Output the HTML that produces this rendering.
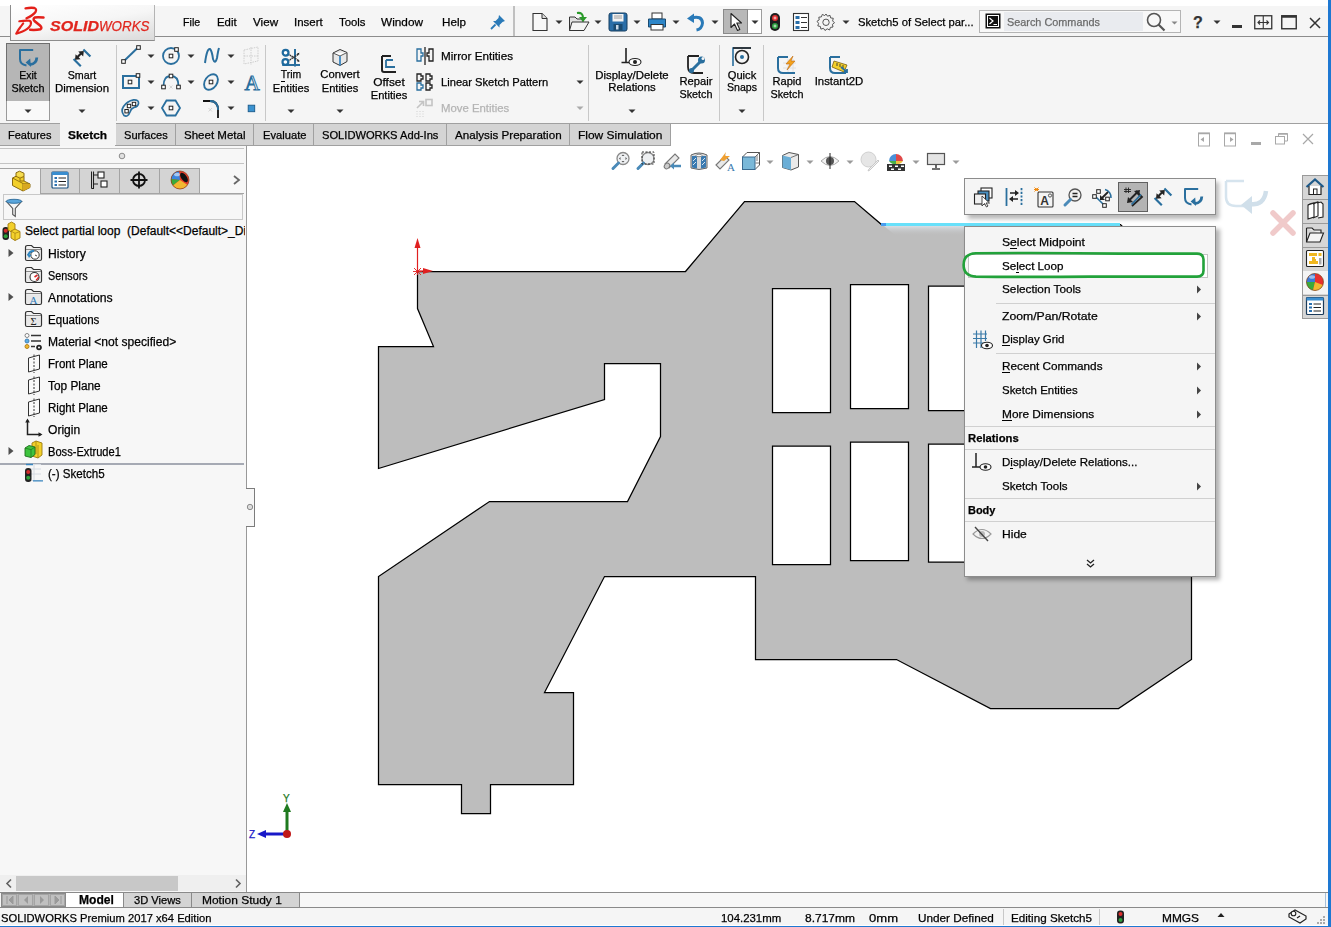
<!DOCTYPE html>
<html><head><meta charset="utf-8"><style>
html,body{margin:0;padding:0;}
body{width:1331px;height:927px;position:relative;overflow:hidden;background:#fff;font-family:"Liberation Sans",sans-serif;}
.t{position:absolute;white-space:pre;line-height:normal;-webkit-text-stroke:0.25px currentColor;}
.r{position:absolute;box-sizing:border-box;}
svg.r{overflow:visible;}
</style></head><body>

<div class="r" style="left:1328px;top:0px;width:3px;height:927px;background:#1e78d2;"></div>
<div class="r" style="left:0px;top:926px;width:1331px;height:1px;background:#1e78d2;"></div>
<div class="r" style="left:0px;top:6px;width:1328px;height:30px;background:#f5f5f5;"></div>
<div class="r" style="left:0px;top:36px;width:1328px;height:1px;background:#8c8c8c;"></div>
<div class="r" style="left:0px;top:37px;width:1328px;height:86px;background:#f5f5f5;"></div>
<div class="r" style="left:0px;top:123px;width:671px;height:23px;background:#d4d4d4;border-top:1px solid #a0a0a0;border-bottom:1px solid #a0a0a0;"></div>
<div class="r" style="left:670px;top:123px;width:658px;height:1px;background:#a0a0a0;"></div>
<div class="r" style="left:0px;top:146px;width:247px;height:746px;background:#f7f7f7;"></div>
<div class="r" style="left:246px;top:146px;width:1px;height:746px;background:#999;"></div>
<div class="r" style="left:0px;top:892px;width:1328px;height:16px;background:#f7f7f7;border-top:1px solid #8a8a8a;"></div>
<div class="r" style="left:66px;top:893px;width:57px;height:14px;background:#fff;"></div>
<div class="r" style="left:0px;top:907px;width:1328px;height:18px;background:#f5f5f5;border-top:1px solid #8a8a8a;"></div>
<svg class="r" style="left:0px;top:0px;pointer-events:none;" width="1331" height="927" viewBox="0 0 1331 927"><path d="M417.5 271.5 L685.5 271.5 L744.5 201.5 L854.5 201.5 L881.5 224.5 L1120.5 224.5 L1191.5 295.5 L1191.5 659.5 L1118.5 708.5 L990.5 708.5 L896.5 659.5 L755.5 659.5 L755.5 576.5 L604.5 576.5 L544.5 692.5 L573.5 692.5 L573.5 784.5 L490.5 784.5 L490.5 813.5 L461.5 813.5 L461.5 784.5 L378.5 784.5 L378.5 576.5 L489.5 501.5 L627.5 501.5 L660.5 436.5 L660.5 363.5 L604.5 363.5 L604.5 399.5 L378.5 468.5 L378.5 346.5 L433.5 346.5 L417.5 308.5 Z M772.5 288.5 h58 v124 h-58 Z M850.5 284.5 h58 v124 h-58 Z M928.5 286.0 h58 v124.5 h-58 Z M772.5 446.0 h58 v118.5 h-58 Z M850.5 442.0 h58 v118.5 h-58 Z M928.5 444.0 h58 v118 h-58 Z" fill="#bdbdbd" fill-rule="evenodd" stroke="#000" stroke-width="1.25" stroke-linejoin="miter"/><defs><linearGradient id="hg" x1="0" y1="0" x2="0" y2="1"><stop offset="0" stop-color="#dfe6ee"/><stop offset="1" stop-color="#bdbdbd" stop-opacity="0"/></linearGradient></defs><path d="M884 226 H1120 V236 H896 Z" fill="url(#hg)" opacity="0.8"/><line x1="881" y1="224.5" x2="1120" y2="224.5" stroke="#68e0fa" stroke-width="3"/><line x1="881" y1="224.5" x2="886" y2="224.5" stroke="#4a9ef0" stroke-width="3"/><line x1="417.5" y1="271" x2="417.5" y2="246" stroke="#e02020" stroke-width="1.2"/><path d="M414.5 248 L417.5 238 L420.5 248 Z" fill="#e02020"/><line x1="417" y1="271" x2="425" y2="271" stroke="#e02020" stroke-width="1.2"/><path d="M423 268 L433 271 L423 274 Z" fill="#e02020"/><path d="M414 268 L421 275 M421 268 L414 275 M417.5 267 V275 M413 271.5 H422" stroke="#e02020" stroke-width="0.9"/></svg>
<svg class="r" style="left:0px;top:0px;pointer-events:none;" width="1331" height="927" viewBox="0 0 1331 927"><line x1="287" y1="833" x2="287" y2="810" stroke="#1f7a1f" stroke-width="3"/><path d="M283 812 L287 803 L291 812 Z" fill="#1f7a1f"/><line x1="286" y1="834" x2="265" y2="834" stroke="#1818c8" stroke-width="3"/><path d="M266 830 L257 834 L266 838 Z" fill="#1818c8"/><circle cx="287" cy="834" r="4" fill="#c01818"/></svg>
<div class="t" style="left:283px;top:793.00px;font-size:10px;color:#1f7a1f;font-weight:normal;">Y</div>
<div class="t" style="left:249px;top:829.00px;font-size:10px;color:#1818c8;font-weight:normal;">Z</div>
<div class="r" style="left:0px;top:148px;width:244px;height:1px;background:#c4c4c4;"></div>
<div class="r" style="left:0px;top:163px;width:244px;height:1px;background:#c4c4c4;"></div>
<svg class="r" style="left:118px;top:152px;" width="8" height="8" viewBox="0 0 8 8"><circle cx="4" cy="4" r="2.8" fill="#e0e0e0" stroke="#8c8c8c" stroke-width="1"/></svg>
<div class="r" style="left:40px;top:168px;width:40px;height:26px;background:#d4d4d4;border:1px solid #a4a4a4;border-bottom:none;"></div>
<div class="r" style="left:80px;top:168px;width:40px;height:26px;background:#d4d4d4;border:1px solid #a4a4a4;border-bottom:none;border-left:none;"></div>
<div class="r" style="left:120px;top:168px;width:40px;height:26px;background:#d4d4d4;border:1px solid #a4a4a4;border-bottom:none;border-left:none;"></div>
<div class="r" style="left:160px;top:168px;width:40px;height:26px;background:#d4d4d4;border:1px solid #a4a4a4;border-bottom:none;border-left:none;"></div>
<div class="r" style="left:0px;top:193px;width:244px;height:1px;background:#a4a4a4;"></div>
<div class="r" style="left:0px;top:168px;width:40px;height:26px;background:#f7f7f7;border-top:1px solid #a4a4a4;"></div>
<div class="r" style="left:40px;top:193px;width:204px;height:1px;background:#a4a4a4;"></div>
<svg class="r" style="left:230px;top:174px;" width="12" height="12" viewBox="0 0 12 12"><path d="M4 2 L9 6 L4 10" fill="none" stroke="#666" stroke-width="1.8"/></svg>
<div class="r" style="left:3px;top:194px;width:240px;height:26px;background:#f7f7f7;border:1px solid #c8c8c8;"></div>
<svg class="r" style="left:5px;top:198px;" width="20" height="20" viewBox="0 0 20 20"><path d="M1.5 3.5 H16.5 L10.3 10.5 V18.5 L7.7 16.5 V10.5 Z" fill="#f4f4f4" stroke="#555" stroke-width="1.1"/><ellipse cx="9" cy="3.3" rx="7.8" ry="2" fill="#5aa6dc" stroke="#2a6a9a" stroke-width="0.9"/></svg>
<div class="r" style="left:25px;top:222px;width:220px;height:20px;overflow:hidden">
<div class="t" style="left:0px;top:2.00px;font-size:12px;color:#000;font-weight:normal;">Select partial loop  (Default&lt;&lt;Default&gt;_Display State 1&gt;)</div>
</div>
<div class="t" style="left:48px;top:247.00px;font-size:12px;color:#000;font-weight:normal;transform:scaleX(1.0097);transform-origin:left top;">History</div>
<div class="t" style="left:48px;top:269.00px;font-size:12px;color:#000;font-weight:normal;transform:scaleX(0.9018);transform-origin:left top;">Sensors</div>
<div class="t" style="left:48px;top:291.00px;font-size:12px;color:#000;font-weight:normal;transform:scaleX(1.0208);transform-origin:left top;">Annotations</div>
<div class="t" style="left:48px;top:313.00px;font-size:12px;color:#000;font-weight:normal;transform:scaleX(0.9630);transform-origin:left top;">Equations</div>
<div class="t" style="left:48px;top:335.00px;font-size:12px;color:#000;font-weight:normal;transform:scaleX(1.0062);transform-origin:left top;">Material &lt;not specified&gt;</div>
<div class="t" style="left:48px;top:357.00px;font-size:12px;color:#000;font-weight:normal;transform:scaleX(0.9640);transform-origin:left top;">Front Plane</div>
<div class="t" style="left:48px;top:379.00px;font-size:12px;color:#000;font-weight:normal;transform:scaleX(0.9874);transform-origin:left top;">Top Plane</div>
<div class="t" style="left:48px;top:401.00px;font-size:12px;color:#000;font-weight:normal;transform:scaleX(0.9639);transform-origin:left top;">Right Plane</div>
<div class="t" style="left:48px;top:423.00px;font-size:12px;color:#000;font-weight:normal;transform:scaleX(1.0059);transform-origin:left top;">Origin</div>
<div class="t" style="left:48px;top:445.00px;font-size:12px;color:#000;font-weight:normal;transform:scaleX(0.9262);transform-origin:left top;">Boss-Extrude1</div>
<div class="t" style="left:48px;top:467.00px;font-size:12px;color:#000;font-weight:normal;transform:scaleX(0.9662);transform-origin:left top;">(-) Sketch5</div>
<svg class="r" style="left:7px;top:247.5px;" width="8" height="10" viewBox="0 0 8 10"><path d="M1.5 1 L6.5 5 L1.5 9 Z" fill="#505050"/></svg>
<svg class="r" style="left:7px;top:291.5px;" width="8" height="10" viewBox="0 0 8 10"><path d="M1.5 1 L6.5 5 L1.5 9 Z" fill="#505050"/></svg>
<svg class="r" style="left:7px;top:445.5px;" width="8" height="10" viewBox="0 0 8 10"><path d="M1.5 1 L6.5 5 L1.5 9 Z" fill="#505050"/></svg>
<div class="r" style="left:0px;top:463px;width:244px;height:2px;background:#a6aab4;"></div>
<div class="r" style="left:246px;top:488px;width:9px;height:39px;background:#f7f7f7;border:1.5px solid #7c7c7c;border-left:none;"></div>
<svg class="r" style="left:246px;top:503px;" width="8" height="8" viewBox="0 0 8 8"><circle cx="4" cy="4" r="2.7" fill="#dcdcdc" stroke="#8c8c8c" stroke-width="1"/></svg>
<div class="r" style="left:0px;top:875px;width:246px;height:16px;background:#efefef;"></div>
<div class="r" style="left:16px;top:876px;width:162px;height:15px;background:#c8c8c8;"></div>
<svg class="r" style="left:2px;top:876px;" width="14" height="15" viewBox="0 0 14 15"><path d="M9 3.5 L5 7.5 L9 11.5" fill="none" stroke="#606060" stroke-width="1.6"/></svg>
<svg class="r" style="left:231px;top:876px;" width="14" height="15" viewBox="0 0 14 15"><path d="M5 3.5 L9 7.5 L5 11.5" fill="none" stroke="#606060" stroke-width="1.6"/></svg>
<svg class="r" style="left:1px;top:221px;" width="21" height="20" viewBox="0 0 21 20"><rect x="1.5" y="6" width="6.5" height="13" rx="3" fill="#222"/><circle cx="4.7" cy="9.7" r="2" fill="#d42a2a"/><circle cx="4.7" cy="15.2" r="2" fill="#2ea33a"/><path d="M7 3 L10.5 1 L14 3 V9 L10.5 11 L7 9 Z" fill="#f2cf2a" stroke="#a07a10" stroke-width="0.9"/><path d="M10 10 L14 8 L19 10.5 V17 L14 19.5 L10 17 Z" fill="#f4d22c" stroke="#a07a10" stroke-width="0.9"/><path d="M10 10 L14 12.3 L19 10.5 M14 12.3 V19.5" fill="none" stroke="#a07a10" stroke-width="0.7"/></svg>
<svg class="r" style="left:24px;top:244px;" width="20" height="19" viewBox="0 0 20 19"><path d="M1.5 3.5 Q1.5 1.5 3.5 1.5 H7.5 L9.5 3.5 H15.5 Q17.5 3.5 17.5 5.5 V15 Q17.5 16.5 16 16.5 H3 Q1.5 16.5 1.5 15 Z" fill="#f2f2f2" stroke="#333" stroke-width="1.2"/><path d="M2 5.5 H17" stroke="#888" stroke-width="1"/><rect x="3" y="6.5" width="13" height="9" fill="#e8e8e8"/><circle cx="11" cy="11" r="4.2" fill="#fff" stroke="#333" stroke-width="1"/><path d="M11 11 L13 12" stroke="#333" stroke-width="0.9"/><path d="M4 11.5 Q5.5 6.5 10 7" fill="none" stroke="#2f86c0" stroke-width="2"/><path d="M3 10 L5 14 L7.5 11 Z" fill="#2f86c0"/></svg>
<svg class="r" style="left:24px;top:266px;" width="20" height="19" viewBox="0 0 20 19"><path d="M1.5 3.5 Q1.5 1.5 3.5 1.5 H7.5 L9.5 3.5 H15.5 Q17.5 3.5 17.5 5.5 V15 Q17.5 16.5 16 16.5 H3 Q1.5 16.5 1.5 15 Z" fill="#f2f2f2" stroke="#333" stroke-width="1.2"/><path d="M2 5.5 H17" stroke="#888" stroke-width="1"/><rect x="3" y="6.5" width="13" height="9" fill="#e8e8e8"/><circle cx="10.5" cy="11" r="4.5" fill="#fff" stroke="#333" stroke-width="1.1"/><path d="M10.5 11 L13.5 9" stroke="#d42a2a" stroke-width="1.6"/><path d="M12 14 A4 4 0 0 0 14.5 11" stroke="#d42a2a" stroke-width="1.4" fill="none"/></svg>
<svg class="r" style="left:24px;top:288px;" width="20" height="19" viewBox="0 0 20 19"><path d="M1.5 3.5 Q1.5 1.5 3.5 1.5 H7.5 L9.5 3.5 H15.5 Q17.5 3.5 17.5 5.5 V15 Q17.5 16.5 16 16.5 H3 Q1.5 16.5 1.5 15 Z" fill="#f2f2f2" stroke="#333" stroke-width="1.2"/><path d="M2 5.5 H17" stroke="#888" stroke-width="1"/><rect x="3" y="6.5" width="13" height="9" fill="#e8e8e8"/><text x="9.5" y="15.5" font-family="Liberation Serif" font-size="11" fill="#2f7ab8" text-anchor="middle">A</text></svg>
<svg class="r" style="left:24px;top:310px;" width="20" height="19" viewBox="0 0 20 19"><path d="M1.5 3.5 Q1.5 1.5 3.5 1.5 H7.5 L9.5 3.5 H15.5 Q17.5 3.5 17.5 5.5 V15 Q17.5 16.5 16 16.5 H3 Q1.5 16.5 1.5 15 Z" fill="#f2f2f2" stroke="#333" stroke-width="1.2"/><path d="M2 5.5 H17" stroke="#888" stroke-width="1"/><rect x="3" y="6.5" width="13" height="9" fill="#e8e8e8"/><text x="9.5" y="15" font-family="Liberation Serif" font-size="10.5" fill="#222" text-anchor="middle">&#931;</text></svg>
<svg class="r" style="left:24px;top:332px;" width="20" height="19" viewBox="0 0 20 19"><circle cx="3" cy="3.5" r="2" fill="#fff" stroke="#777" stroke-width="0.9"/><circle cx="3" cy="9" r="2" fill="#5aaee6" stroke="#3a7ab0" stroke-width="0.9"/><circle cx="3" cy="14.5" r="2" fill="#f0b830" stroke="#b07a10" stroke-width="0.9"/><path d="M7 3.5 H17 M7 9 H17 M7 14.5 H11" stroke="#333" stroke-width="1.4"/><circle cx="15" cy="15.5" r="2.8" fill="#222"/><circle cx="15" cy="15.5" r="1" fill="#fff"/></svg>
<svg class="r" style="left:26px;top:354px;" width="16" height="20" viewBox="0 0 16 20"><path d="M2.5 4 L13.5 1 V15 L2.5 18 Z" fill="#fafafa" stroke="#333" stroke-width="1"/><path d="M8 0.5 V19" stroke="#333" stroke-width="1" stroke-dasharray="2 1.5"/></svg>
<svg class="r" style="left:26px;top:376px;" width="16" height="20" viewBox="0 0 16 20"><path d="M2.5 4 L13.5 1 V15 L2.5 18 Z" fill="#fafafa" stroke="#333" stroke-width="1"/><path d="M8 0.5 V19" stroke="#333" stroke-width="1" stroke-dasharray="2 1.5"/></svg>
<svg class="r" style="left:26px;top:398px;" width="16" height="20" viewBox="0 0 16 20"><path d="M2.5 4 L13.5 1 V15 L2.5 18 Z" fill="#fafafa" stroke="#333" stroke-width="1"/><path d="M8 0.5 V19" stroke="#333" stroke-width="1" stroke-dasharray="2 1.5"/></svg>
<svg class="r" style="left:24px;top:418px;" width="20" height="20" viewBox="0 0 20 20"><path d="M3.5 2 V16.5 H17" fill="none" stroke="#222" stroke-width="1.5"/><path d="M1.2 4.5 L3.5 0.5 L5.8 4.5 Z M14.5 14.2 L18.5 16.5 L14.5 18.8 Z" fill="#222"/></svg>
<svg class="r" style="left:24px;top:440px;" width="20" height="20" viewBox="0 0 20 20"><path d="M8 3 L12 1 L18 3 V15 L14 18 L8 16 Z" fill="#f2d02a" stroke="#9a7a10" stroke-width="0.9"/><path d="M12 1 V14 M14 5 V18" stroke="#9a7a10" stroke-width="0.7"/><path d="M1 8 L5 5.5 L11 7 V14.5 L7 17.5 L1 16 Z" fill="#3ec43e" stroke="#1e6e1e" stroke-width="0.9"/><path d="M1 8 L7 9.7 L11 7 M7 9.7 V17.5" fill="none" stroke="#1e6e1e" stroke-width="0.7"/></svg>
<svg class="r" style="left:24px;top:463px;" width="20" height="20" viewBox="0 0 20 20"><path d="M2 1.5 H17 M2 17.5 H17 M10 2 V17 M6 6 H17 M6 11 H17" stroke="#d6dbe2" stroke-width="1"/><path d="M2 1.5 H9 M9 17.8 H19" stroke="#3a86c0" stroke-width="1.3"/><rect x="1" y="5" width="6.5" height="14" rx="3" fill="#222"/><circle cx="4.2" cy="9" r="2" fill="#d42a2a"/><circle cx="4.2" cy="14.8" r="2" fill="#2ea33a"/></svg>
<svg class="r" style="left:10px;top:170px;" width="22" height="22" viewBox="0 0 22 22"><path d="M2.5 8 L9.5 4.5 L14 6.5 V11 L20 14 V17.5 L13 21 L2.5 15.5 Z" fill="#f2cf2a" stroke="#8a6a10" stroke-width="1"/><path d="M6 6.3 V2.8 L9.5 1.2 L14 3.2 V6.5" fill="#f6dc50" stroke="#8a6a10" stroke-width="1"/><path d="M2.5 8 L13 13.5 V21 M13 13.5 L20 14 M6 6.3 L10 8.2 L14 6.5 M10 8.2 V11 L14 11" fill="none" stroke="#8a6a10" stroke-width="0.9"/><path d="M13 13.5 L20 14 V17.5 L13 21 Z" fill="#d8a820"/></svg>
<svg class="r" style="left:50px;top:170px;" width="20" height="20" viewBox="0 0 20 20"><rect x="2" y="2" width="16" height="16" rx="1" fill="#fff" stroke="#1a5080" stroke-width="1.2"/><rect x="2" y="2" width="16" height="3" fill="#3a8ed0"/><path d="M4.5 8 H7 M4.5 11.5 H7 M4.5 15 H7" stroke="#2a70b0" stroke-width="1.8"/><path d="M8.5 8 H16 M8.5 11.5 H16 M8.5 15 H16" stroke="#222" stroke-width="1"/></svg>
<svg class="r" style="left:90px;top:170px;" width="20" height="20" viewBox="0 0 20 20"><path d="M3.5 1.5 V18.5" stroke="#222" stroke-width="1.1"/><path d="M3.5 5 H8 M3.5 14 H8" stroke="#222" stroke-width="1"/><rect x="8" y="2" width="6" height="6" fill="#fff" stroke="#222" stroke-width="1.1"/><rect x="11" y="11" width="6" height="6" fill="#fff" stroke="#222" stroke-width="1.1"/><path d="M1.5 1.5 V18.5 M1.5 18.5 H4" stroke="#222" stroke-width="1"/></svg>
<svg class="r" style="left:129px;top:170px;" width="20" height="20" viewBox="0 0 20 20"><circle cx="10" cy="10" r="6" fill="none" stroke="#111" stroke-width="1.8"/><path d="M10 1.5 V18.5 M1.5 10 H18.5" stroke="#111" stroke-width="1.8"/></svg>
<svg class="r" style="left:170px;top:170px;" width="20" height="20" viewBox="0 0 20 20"><circle cx="10" cy="10" r="9" fill="#e83a2a"/><path d="M10 10 L1 9 A9 9 0 0 1 9 1 Z" fill="#3a86e0"/><path d="M10 10 L1 9 A9 9 0 0 0 3 15.5 Z" fill="#3aaa3a"/><path d="M10 10 L3 15.5 A9 9 0 0 0 17.5 15 Z" fill="#f2b830"/><ellipse cx="14" cy="7.5" rx="2.8" ry="5.5" fill="#111" transform="rotate(-35 14 7.5)"/><ellipse cx="7" cy="4.5" rx="3" ry="1.8" fill="#fff" opacity="0.55"/><circle cx="10" cy="10" r="9" fill="none" stroke="#8a3a10" stroke-width="0.7"/></svg>
<div class="r" style="left:0px;top:145px;width:1px;height:0px;"></div>
<div class="r" style="left:60px;top:124px;width:1px;height:21px;background:#a0a0a0;"></div>
<div class="r" style="left:115px;top:124px;width:1px;height:21px;background:#a0a0a0;"></div>
<div class="r" style="left:115.5px;top:145px;width:1px;height:0px;"></div>
<div class="r" style="left:175px;top:124px;width:1px;height:21px;background:#a0a0a0;"></div>
<div class="r" style="left:175.5px;top:145px;width:1px;height:0px;"></div>
<div class="r" style="left:253px;top:124px;width:1px;height:21px;background:#a0a0a0;"></div>
<div class="r" style="left:253.5px;top:145px;width:1px;height:0px;"></div>
<div class="r" style="left:313px;top:124px;width:1px;height:21px;background:#a0a0a0;"></div>
<div class="r" style="left:313.5px;top:145px;width:1px;height:0px;"></div>
<div class="r" style="left:446px;top:124px;width:1px;height:21px;background:#a0a0a0;"></div>
<div class="r" style="left:446.5px;top:145px;width:1px;height:0px;"></div>
<div class="r" style="left:569px;top:124px;width:1px;height:21px;background:#a0a0a0;"></div>
<div class="r" style="left:569.5px;top:145px;width:1px;height:0px;"></div>
<div class="r" style="left:670px;top:124px;width:1px;height:21px;background:#a0a0a0;"></div>
<div class="r" style="left:60px;top:123px;width:56px;height:23px;background:#f5f5f5;"></div>
<div class="r" style="left:0px;top:145px;width:60px;height:1px;background:#a0a0a0;"></div>
<div class="r" style="left:115px;top:145px;width:556px;height:1px;background:#a0a0a0;"></div>
<div class="t" style="left:8.3px;top:129.00px;font-size:11.4px;color:#000;font-weight:normal;transform:scaleX(0.9669);transform-origin:left top;">Features</div>
<div class="t" style="left:67.6px;top:129.00px;font-size:11.4px;color:#000;font-weight:bold;transform:scaleX(1.0459);transform-origin:left top;">Sketch</div>
<div class="t" style="left:124px;top:129.00px;font-size:11.4px;color:#000;font-weight:normal;transform:scaleX(0.9736);transform-origin:left top;">Surfaces</div>
<div class="t" style="left:184.4px;top:129.00px;font-size:11.4px;color:#000;font-weight:normal;transform:scaleX(1.0125);transform-origin:left top;">Sheet Metal</div>
<div class="t" style="left:262.6px;top:129.00px;font-size:11.4px;color:#000;font-weight:normal;transform:scaleX(0.9805);transform-origin:left top;">Evaluate</div>
<div class="t" style="left:322.1px;top:129.00px;font-size:11.4px;color:#000;font-weight:normal;transform:scaleX(0.9781);transform-origin:left top;">SOLIDWORKS Add-Ins</div>
<div class="t" style="left:455px;top:129.00px;font-size:11.4px;color:#000;font-weight:normal;transform:scaleX(1.0205);transform-origin:left top;">Analysis Preparation</div>
<div class="t" style="left:578px;top:129.00px;font-size:11.4px;color:#000;font-weight:normal;transform:scaleX(1.0501);transform-origin:left top;">Flow Simulation</div>
<div class="r" style="left:6px;top:43px;width:44px;height:59px;background:#b6b6b6;border:1px solid #6e6e6e;"></div>
<div class="r" style="left:6px;top:101px;width:44px;height:20px;background:#f9f9f9;border:1px solid #9a9a9a;border-top:none;"></div>
<svg class="r" style="left:16px;top:47px;" width="24" height="24" viewBox="0 0 24 24"><path d="M4 3 H17.2 M4 2.2 V12 Q4 17.5 10.5 18.5" fill="none" stroke="#2a6f9e" stroke-width="2"/><path d="M20.8 10.5 Q20.5 17 14 17.5" fill="none" stroke="#2a6f9e" stroke-width="2.8"/><path d="M9.6 15.6 L14.2 11.6 L15 20 Z" fill="#2a6f9e"/></svg>
<div class="t" style="left:-172px;width:400px;text-align:center;top:69.00px;font-size:11.4px;color:#000;font-weight:normal;transform:scaleX(0.9209);transform-origin:center top;">Exit</div>
<div class="t" style="left:-172px;width:400px;text-align:center;top:82.00px;font-size:11.4px;color:#000;font-weight:normal;transform:scaleX(0.9469);transform-origin:center top;">Sketch</div>
<svg class="r" style="left:24px;top:108.5px;" width="8" height="5" viewBox="0 0 8 5"><path d="M0.5 0.5 H7.5 L4 4 Z" fill="#333"/></svg>
<svg class="r" style="left:72px;top:47px;" width="22" height="22" viewBox="0 0 22 22"><path d="M11.4 2.4 L18.4 9.6 M1.6 12 L8.8 19.2" stroke="#2a6f9e" stroke-width="2.2"/><path d="M5.5 10 L9 6.5" stroke="#222" stroke-width="2.2"/><path d="M3 12.8 L3.6 7.2 L8.6 12.2 Z M11.8 4 L6.2 4.6 L11.2 9.6 Z" fill="#222"/></svg>
<div class="t" style="left:-118px;width:400px;text-align:center;top:69.00px;font-size:11.4px;color:#000;font-weight:normal;transform:scaleX(0.9373);transform-origin:center top;">Smart</div>
<div class="t" style="left:-118px;width:400px;text-align:center;top:82.00px;font-size:11.4px;color:#000;font-weight:normal;transform:scaleX(1.0027);transform-origin:center top;">Dimension</div>
<svg class="r" style="left:78px;top:108.5px;" width="8" height="5" viewBox="0 0 8 5"><path d="M0.5 0.5 H7.5 L4 4 Z" fill="#333"/></svg>
<div class="r" style="left:116px;top:45px;width:1px;height:76px;background:#c8c8c8;"></div>
<svg class="r" style="left:121px;top:45px;" width="20" height="20" viewBox="0 0 20 20"><path d="M3 16 L17 2.5" stroke="#2a6f9e" stroke-width="2"/><rect x="0.7" y="14.7" width="3.6" height="3.6" fill="#fff" stroke="#222" stroke-width="1"/><rect x="15.7" y="0.7" width="3.6" height="3.6" fill="#fff" stroke="#222" stroke-width="1"/></svg>
<svg class="r" style="left:146.5px;top:54px;" width="8" height="5" viewBox="0 0 8 5"><path d="M0.5 0.5 H7.5 L4 4 Z" fill="#333"/></svg>
<svg class="r" style="left:161px;top:46px;" width="20" height="20" viewBox="0 0 20 20"><circle cx="10" cy="10" r="8" fill="none" stroke="#2a6f9e" stroke-width="1.8"/><rect x="8.2" y="8.2" width="3.6" height="3.6" fill="#fff" stroke="#222" stroke-width="1"/><rect x="13.7" y="1.7" width="3.6" height="3.6" fill="#fff" stroke="#222" stroke-width="1"/></svg>
<svg class="r" style="left:186.5px;top:54px;" width="8" height="5" viewBox="0 0 8 5"><path d="M0.5 0.5 H7.5 L4 4 Z" fill="#333"/></svg>
<svg class="r" style="left:202px;top:46px;" width="20" height="20" viewBox="0 0 20 20"><path d="M3 17 Q5 2 8 3 Q10 5 11 13 Q13 19 15 12 Q16 5 17 2" fill="none" stroke="#2a6f9e" stroke-width="2"/></svg>
<svg class="r" style="left:226.5px;top:54px;" width="8" height="5" viewBox="0 0 8 5"><path d="M0.5 0.5 H7.5 L4 4 Z" fill="#333"/></svg>
<svg class="r" style="left:242px;top:46px;" width="18" height="20" viewBox="0 0 18 20"><path d="M2 4 L16 1 V15 L2 18 Z M9 1 V19 M2 10 H16" fill="none" stroke="#cfcfcf" stroke-width="1" stroke-dasharray="1.5 1"/></svg>
<svg class="r" style="left:121px;top:73px;" width="20" height="18" viewBox="0 0 20 18"><rect x="2" y="3" width="16" height="12" fill="none" stroke="#2a6f9e" stroke-width="2"/><rect x="7.2" y="7.2" width="3.6" height="3.6" fill="#fff" stroke="#222" stroke-width="1"/><rect x="15.2" y="0.7" width="3.6" height="3.6" fill="#fff" stroke="#222" stroke-width="1"/></svg>
<svg class="r" style="left:146.5px;top:80px;" width="8" height="5" viewBox="0 0 8 5"><path d="M0.5 0.5 H7.5 L4 4 Z" fill="#333"/></svg>
<svg class="r" style="left:161px;top:73px;" width="20" height="18" viewBox="0 0 20 18"><path d="M2.5 13 Q2.5 3 10 3 Q17.5 3 17.5 13" fill="none" stroke="#2a6f9e" stroke-width="1.8"/><rect x="8.2" y="1.2" width="3.6" height="3.6" fill="#fff" stroke="#222" stroke-width="1"/><rect x="0.7" y="12.2" width="3.6" height="3.6" fill="#fff" stroke="#222" stroke-width="1"/><rect x="15.7" y="12.2" width="3.6" height="3.6" fill="#fff" stroke="#222" stroke-width="1"/><path d="M8.5 12.5 L11.5 15.5 M11.5 12.5 L8.5 15.5" stroke="#ccc" stroke-width="0.8"/></svg>
<svg class="r" style="left:186.5px;top:80px;" width="8" height="5" viewBox="0 0 8 5"><path d="M0.5 0.5 H7.5 L4 4 Z" fill="#333"/></svg>
<svg class="r" style="left:201px;top:72px;" width="20" height="20" viewBox="0 0 20 20"><ellipse cx="10" cy="10" rx="8.5" ry="6" fill="none" stroke="#2a6f9e" stroke-width="1.9" transform="rotate(-55 10 10)"/><rect x="8.2" y="8.2" width="3.6" height="3.6" fill="#fff" stroke="#222" stroke-width="1"/></svg>
<svg class="r" style="left:226.5px;top:80px;" width="8" height="5" viewBox="0 0 8 5"><path d="M0.5 0.5 H7.5 L4 4 Z" fill="#333"/></svg>
<svg class="r" style="left:242px;top:72px;" width="20" height="20" viewBox="0 0 20 20"><text x="10" y="17.5" font-family="Liberation Serif" font-size="21" fill="none" stroke="#2a6f9e" stroke-width="1" text-anchor="middle">A</text></svg>
<svg class="r" style="left:121px;top:98px;" width="20" height="20" viewBox="0 0 20 20"><path d="M3 17.5 Q-0.5 13 2.5 8.5 Q6 3 12.5 1.8 Q18 1.5 17.5 5.5 Q17 8.5 13 9.5 Q10 10.5 9 14 Q7 19.5 3 17.5 Z" fill="none" stroke="#2a6f9e" stroke-width="1.7"/><rect x="3.8999999999999995" y="11.5" width="3.4" height="3.4" fill="#fff" stroke="#222" stroke-width="1"/><rect x="6.3" y="6.3" width="3.4" height="3.4" fill="#fff" stroke="#222" stroke-width="1"/><rect x="11.3" y="4.3" width="3.4" height="3.4" fill="#fff" stroke="#222" stroke-width="1"/></svg>
<svg class="r" style="left:146.5px;top:105.5px;" width="8" height="5" viewBox="0 0 8 5"><path d="M0.5 0.5 H7.5 L4 4 Z" fill="#333"/></svg>
<svg class="r" style="left:161px;top:98px;" width="20" height="20" viewBox="0 0 20 20"><path d="M5.5 2.5 H14.5 L19 10 L14.5 17.5 H5.5 L1 10 Z" fill="none" stroke="#2a6f9e" stroke-width="1.8"/><rect x="8.2" y="8.2" width="3.6" height="3.6" fill="#fff" stroke="#222" stroke-width="1"/></svg>
<svg class="r" style="left:201px;top:98px;" width="20" height="22" viewBox="0 0 20 22"><path d="M2 3 H9 Q17 3 17 12 V20" fill="none" stroke="#111" stroke-width="1.8"/><path d="M9 3 Q17 3 17 12" fill="none" stroke="#2a6f9e" stroke-width="1.8"/><path d="M7.5 10 L11 13.5 M11 10 L7.5 13.5" stroke="#ccc" stroke-width="0.8"/></svg>
<svg class="r" style="left:226.5px;top:105.5px;" width="8" height="5" viewBox="0 0 8 5"><path d="M0.5 0.5 H7.5 L4 4 Z" fill="#333"/></svg>
<svg class="r" style="left:247px;top:104px;" width="9" height="9" viewBox="0 0 9 9"><rect x="1.2" y="1.2" width="6.5" height="6.5" fill="#3a92d0" stroke="#1a5a8a" stroke-width="0.9"/></svg>
<div class="r" style="left:265px;top:45px;width:1px;height:76px;background:#c8c8c8;"></div>
<svg class="r" style="left:281px;top:46px;" width="22" height="22" viewBox="0 0 22 22"><path d="M14 3 V20.5 M1.2 18.9 H19" stroke="#2a6f9e" stroke-width="2"/><path d="M7 8 L18 14.8 M7 15 L18 7.8" stroke="#333" stroke-width="1.5" stroke-dasharray="1.5 0.6"/><circle cx="4.6" cy="6.7" r="2.9" fill="#fff" stroke="#1e6a9e" stroke-width="2.2"/><circle cx="4.4" cy="16" r="2.9" fill="#fff" stroke="#1e6a9e" stroke-width="2.2"/><path d="M16 7.5 L18.5 6.8 L17.5 9 Z M16 15.2 L18.5 16 L17.5 13.8 Z" fill="#222"/></svg>
<div class="t" style="left:91px;width:400px;text-align:center;top:68.00px;font-size:11.4px;color:#000;font-weight:normal;transform:scaleX(0.9165);transform-origin:center top;">Trim</div>
<div class="t" style="left:91px;width:400px;text-align:center;top:82.00px;font-size:11.4px;color:#000;font-weight:normal;transform:scaleX(0.9790);transform-origin:center top;">Entities</div>
<div class="r" style="left:281px;top:81px;width:4px;height:1px;background:#000;"></div>
<svg class="r" style="left:287px;top:108.5px;" width="8" height="5" viewBox="0 0 8 5"><path d="M0.5 0.5 H7.5 L4 4 Z" fill="#333"/></svg>
<svg class="r" style="left:331px;top:48px;" width="18" height="20" viewBox="0 0 18 20"><path d="M2 5 L9 1.5 L16 4.5 V13.5 L9 17.5 L2 14 Z" fill="#e8e8e8" stroke="#333" stroke-width="1"/><path d="M2 5 L9 8 L16 4.5" fill="#fff" stroke="#333" stroke-width="0.8"/><path d="M9 8 V17.5" stroke="#3a86c0" stroke-width="1.8"/></svg>
<div class="t" style="left:140px;width:400px;text-align:center;top:68.00px;font-size:11.4px;color:#000;font-weight:normal;transform:scaleX(0.9895);transform-origin:center top;">Convert</div>
<div class="t" style="left:140px;width:400px;text-align:center;top:82.00px;font-size:11.4px;color:#000;font-weight:normal;transform:scaleX(0.9790);transform-origin:center top;">Entities</div>
<svg class="r" style="left:336px;top:108.5px;" width="8" height="5" viewBox="0 0 8 5"><path d="M0.5 0.5 H7.5 L4 4 Z" fill="#333"/></svg>
<svg class="r" style="left:379px;top:54px;" width="20" height="20" viewBox="0 0 20 20"><path d="M3 2 H12 M3 2 V16 Q3 18 5 18 H17" fill="none" stroke="#222" stroke-width="2"/><path d="M7 6 H14 M7 6 V13 H16" fill="none" stroke="#2a6f9e" stroke-width="1.8"/></svg>
<div class="t" style="left:189px;width:400px;text-align:center;top:76.00px;font-size:11.4px;color:#000;font-weight:normal;transform:scaleX(1.0429);transform-origin:center top;">Offset</div>
<div class="t" style="left:189px;width:400px;text-align:center;top:89.00px;font-size:11.4px;color:#000;font-weight:normal;transform:scaleX(0.9790);transform-origin:center top;">Entities</div>
<svg class="r" style="left:415px;top:46px;" width="20" height="20" viewBox="0 0 20 20"><path d="M2 3 H6 V7 H8 V10 H6 V15 H2 Z" fill="none" stroke="#2a6f9e" stroke-width="1.3"/><path d="M10 1 V19" stroke="#222" stroke-width="1.3"/><path d="M18 3 H14 V7 H12 V10 H14 V15 H18 Z" fill="none" stroke="#222" stroke-width="1.3"/></svg>
<div class="t" style="left:441.3px;top:50.00px;font-size:11.4px;color:#000;font-weight:normal;transform:scaleX(1.0254);transform-origin:left top;">Mirror Entities</div>
<svg class="r" style="left:415px;top:72px;" width="20" height="20" viewBox="0 0 20 20"><path d="M2 2 H6 V4 H8 V7 H6 V9 H2 Z M11 2 H15 V4 H17 V7 H15 V9 H11 Z M11 11 H15 V13 H17 V16 H15 V18 H11 Z" fill="none" stroke="#222" stroke-width="1.3"/><path d="M2 11 H6 V13 H8 V16 H6 V18 H2 Z" fill="none" stroke="#2a6f9e" stroke-width="1.3"/></svg>
<div class="t" style="left:441.3px;top:76.00px;font-size:11.4px;color:#000;font-weight:normal;transform:scaleX(0.9787);transform-origin:left top;">Linear Sketch Pattern</div>
<svg class="r" style="left:575.5px;top:79.5px;" width="8" height="5" viewBox="0 0 8 5"><path d="M0.5 0.5 H7.5 L4 4 Z" fill="#333"/></svg>
<svg class="r" style="left:415px;top:98px;" width="20" height="20" viewBox="0 0 20 20"><path d="M2 10 L8 4 M4 3.5 H8.5 V8" fill="none" stroke="#c4c4c4" stroke-width="1.6"/><rect x="11" y="1.5" width="6" height="6" fill="none" stroke="#c4c4c4" stroke-width="1.6"/><path d="M2 13 V19 M5 13 V19 M8 13 V19" stroke="#d8d8d8" stroke-width="1.2" stroke-dasharray="1 1.5"/></svg>
<div class="t" style="left:441.3px;top:102.00px;font-size:11.4px;color:#b4b4b4;font-weight:normal;transform:scaleX(0.9981);transform-origin:left top;">Move Entities</div>
<svg class="r" style="left:575.5px;top:105.5px;" width="8" height="5" viewBox="0 0 8 5"><path d="M0.5 0.5 H7.5 L4 4 Z" fill="#aaa"/></svg>
<div class="r" style="left:588px;top:45px;width:1px;height:76px;background:#c8c8c8;"></div>
<svg class="r" style="left:620px;top:46px;" width="24" height="22" viewBox="0 0 24 22"><path d="M6 2 V16 M1.5 16.5 H11" stroke="#222" stroke-width="1.6"/><ellipse cx="15" cy="16" rx="6" ry="3.5" fill="#fff" stroke="#222" stroke-width="1.1"/><circle cx="15" cy="16" r="2" fill="#222"/></svg>
<div class="t" style="left:432px;width:400px;text-align:center;top:69.00px;font-size:11.4px;color:#000;font-weight:normal;transform:scaleX(0.9986);transform-origin:center top;">Display/Delete</div>
<div class="t" style="left:432px;width:400px;text-align:center;top:81.00px;font-size:11.4px;color:#000;font-weight:normal;transform:scaleX(0.9994);transform-origin:center top;">Relations</div>
<svg class="r" style="left:628px;top:108.5px;" width="8" height="5" viewBox="0 0 8 5"><path d="M0.5 0.5 H7.5 L4 4 Z" fill="#333"/></svg>
<svg class="r" style="left:686px;top:54px;" width="22" height="22" viewBox="0 0 22 22"><path d="M2 2 H13 M2 2 V13 Q2 19 8 19 H17" fill="none" stroke="#222" stroke-width="1.8"/><path d="M6 16 L14 8" stroke="#2a6f9e" stroke-width="3"/><circle cx="15.5" cy="6" r="3.5" fill="#2a6f9e"/><circle cx="17" cy="4.5" r="1.5" fill="#f5f5f5"/><circle cx="5.5" cy="16.5" r="2.5" fill="#2a6f9e"/></svg>
<div class="t" style="left:496px;width:400px;text-align:center;top:75.00px;font-size:11.4px;color:#000;font-weight:normal;transform:scaleX(0.9826);transform-origin:center top;">Repair</div>
<div class="t" style="left:496px;width:400px;text-align:center;top:88.00px;font-size:11.4px;color:#000;font-weight:normal;transform:scaleX(0.9469);transform-origin:center top;">Sketch</div>
<div class="r" style="left:719px;top:45px;width:1px;height:76px;background:#c8c8c8;"></div>
<svg class="r" style="left:731px;top:46px;" width="22" height="22" viewBox="0 0 22 22"><path d="M2 20 V2 H20" fill="none" stroke="#2a6f9e" stroke-width="1.6"/><path d="M2 2 H20" stroke="#222" stroke-width="1.6"/><circle cx="11" cy="11" r="6.5" fill="none" stroke="#222" stroke-width="1.6"/><circle cx="11" cy="11" r="2" fill="#2a6f9e"/></svg>
<div class="t" style="left:541.5px;width:400px;text-align:center;top:69.00px;font-size:11.4px;color:#000;font-weight:normal;transform:scaleX(0.9780);transform-origin:center top;">Quick</div>
<div class="t" style="left:541.5px;width:400px;text-align:center;top:81.00px;font-size:11.4px;color:#000;font-weight:normal;transform:scaleX(0.9281);transform-origin:center top;">Snaps</div>
<svg class="r" style="left:737.5px;top:108.5px;" width="8" height="5" viewBox="0 0 8 5"><path d="M0.5 0.5 H7.5 L4 4 Z" fill="#333"/></svg>
<div class="r" style="left:763px;top:45px;width:1px;height:76px;background:#c8c8c8;"></div>
<svg class="r" style="left:776px;top:55px;" width="22" height="20" viewBox="0 0 22 20"><path d="M7 8 H20 M7 13 H20 M12 4 V19 M17 4 V19" stroke="#e0e0e0" stroke-width="1"/><path d="M2 2 H12 M2 2 V13 Q2 18 7 18 H19" fill="none" stroke="#2a6f9e" stroke-width="2"/><path d="M17 1 L10 9 H14 L11 15 L19 6 H15 Z" fill="#f4a21a" stroke="#c06a10" stroke-width="0.6"/></svg>
<div class="t" style="left:587px;width:400px;text-align:center;top:75.00px;font-size:11.4px;color:#000;font-weight:normal;transform:scaleX(0.9736);transform-origin:center top;">Rapid</div>
<div class="t" style="left:587px;width:400px;text-align:center;top:88.00px;font-size:11.4px;color:#000;font-weight:normal;transform:scaleX(0.9469);transform-origin:center top;">Sketch</div>
<svg class="r" style="left:828px;top:55px;" width="22" height="20" viewBox="0 0 22 20"><path d="M2 2 H12 M2 2 V13 Q2 18 7 18 H18" fill="none" stroke="#2a6f9e" stroke-width="2"/><path d="M6 6 L19 10 L16 17 L4 12 Z" fill="#f2cf2a" stroke="#7a6010" stroke-width="0.8"/><path d="M9 8 V11 M12 9 V12 M15 10 V13" stroke="#333" stroke-width="0.9"/><path d="M13 12 L19 17 M16 17 H19 V14" fill="none" stroke="#2a6f9e" stroke-width="1.8"/></svg>
<div class="t" style="left:638.7px;width:400px;text-align:center;top:75.00px;font-size:11.4px;color:#000;font-weight:normal;transform:scaleX(0.9980);transform-origin:center top;">Instant2D</div>
<div class="r" style="left:10px;top:5px;width:145px;height:36px;background:linear-gradient(170deg,#ffffff 0%,#f6f6f6 50%,#dadada 100%);border-left:1px solid #8c8c8c;border-right:1px solid #b4b4b4;border-bottom:1px solid #8c8c8c;"></div>
<svg class="r" style="left:14px;top:6px;" width="34" height="30" viewBox="0 0 34 30"><path d="M11.5 2.3 Q17 1.4 20.5 2 Q23 3 21.5 6 Q19 9.5 12.5 12.3" fill="none" stroke="#e3201a" stroke-width="2.3" stroke-linecap="round"/><path d="M5.3 15.3 Q12 14.2 15.5 14.8 Q17.8 15.8 16.6 19 Q14.5 23 8.5 25.5 Q5 27 2.2 27.6 Q4 24 6.5 21 L9.2 17.3" fill="none" stroke="#e3201a" stroke-width="2.1" stroke-linejoin="round" stroke-linecap="round"/><path d="M29.5 11.5 Q23 10.8 20.8 11.5 Q18.6 12.8 20.5 15 L26 19.5 Q28.5 22 26.5 23.3 Q22 24.2 16.2 23.8" fill="none" stroke="#e3201a" stroke-width="2.5" stroke-linecap="round"/></svg>
<div class="t" style="left:49.5px;top:17.00px;font-size:15px;color:#e0261e;font-weight:bold;transform:scaleX(1.07);transform-origin:left top;"><i>SOLID</i></div>
<div class="t" style="left:98.5px;top:17.00px;font-size:15px;color:#e0261e;font-weight:normal;transform:scaleX(0.89);transform-origin:left top;"><i>WORKS</i></div>
<div class="t" style="left:183.4px;top:16.00px;font-size:11.4px;color:#000;font-weight:normal;transform:scaleX(0.9363);transform-origin:left top;">File</div>
<div class="t" style="left:217.3px;top:16.00px;font-size:11.4px;color:#000;font-weight:normal;transform:scaleX(0.9977);transform-origin:left top;">Edit</div>
<div class="t" style="left:252.9px;top:16.00px;font-size:11.4px;color:#000;font-weight:normal;transform:scaleX(1.0243);transform-origin:left top;">View</div>
<div class="t" style="left:294px;top:16.00px;font-size:11.4px;color:#000;font-weight:normal;transform:scaleX(1.0101);transform-origin:left top;">Insert</div>
<div class="t" style="left:338.6px;top:16.00px;font-size:11.4px;color:#000;font-weight:normal;transform:scaleX(0.9957);transform-origin:left top;">Tools</div>
<div class="t" style="left:381px;top:16.00px;font-size:11.4px;color:#000;font-weight:normal;transform:scaleX(1.0358);transform-origin:left top;">Window</div>
<div class="t" style="left:441.5px;top:16.00px;font-size:11.4px;color:#000;font-weight:normal;transform:scaleX(1.0236);transform-origin:left top;">Help</div>
<svg class="r" style="left:489px;top:13px;" width="18" height="18" viewBox="0 0 18 18"><path d="M10 2 L16 8 L13.5 9 L10.5 12 L10.5 14.5 L4 8 L6.5 8 L9.5 5 Z" fill="#2a7ab8"/><path d="M6.5 11.5 L2 16" stroke="#2a7ab8" stroke-width="1.8"/></svg>
<div class="r" style="left:513px;top:6px;width:2px;height:30px;background:#c0c0c0;"></div>
<svg class="r" style="left:531px;top:12px;" width="18" height="20" viewBox="0 0 18 20"><path d="M2 1.5 H11 L16 6.5 V18.5 H2 Z" fill="#f8f8f8" stroke="#333" stroke-width="1.1"/><path d="M11 1.5 V6.5 H16" fill="#ddd" stroke="#333" stroke-width="1"/></svg>
<svg class="r" style="left:555px;top:20px;" width="8" height="5" viewBox="0 0 8 5"><path d="M0.5 0.5 H7.5 L4 4 Z" fill="#333"/></svg>
<svg class="r" style="left:568px;top:11px;" width="22" height="21" viewBox="0 0 22 21"><path d="M1.5 6 H7 L9 8 H15 V19.5 H1.5 Z" fill="#e0e0e0" stroke="#333" stroke-width="1"/><path d="M4 11 H21 L16 19.5 H1.5 Z" fill="#f4f4f4" stroke="#333" stroke-width="1"/><path d="M9 2 Q15 1 15 7" fill="none" stroke="#2a9a2a" stroke-width="2.2"/><path d="M11 6 L15 11 L19 6 Z" fill="#2a9a2a"/></svg>
<svg class="r" style="left:594px;top:20px;" width="8" height="5" viewBox="0 0 8 5"><path d="M0.5 0.5 H7.5 L4 4 Z" fill="#333"/></svg>
<svg class="r" style="left:608px;top:12px;" width="20" height="20" viewBox="0 0 20 20"><rect x="1" y="1" width="18" height="18" rx="2" fill="#2a6ea8" stroke="#173e60" stroke-width="1"/><rect x="4.5" y="2" width="11" height="7.5" fill="#f2f2f2"/><path d="M6 4 H14 M6 6 H14" stroke="#888" stroke-width="0.8"/><rect x="5.5" y="12" width="9" height="6.5" fill="#1a4a70"/><rect x="8" y="13" width="2.5" height="4.5" fill="#c8d8e8"/></svg>
<svg class="r" style="left:633px;top:20px;" width="8" height="5" viewBox="0 0 8 5"><path d="M0.5 0.5 H7.5 L4 4 Z" fill="#333"/></svg>
<svg class="r" style="left:647px;top:11px;" width="20" height="21" viewBox="0 0 20 21"><rect x="5" y="2" width="10" height="6" fill="#fff" stroke="#333" stroke-width="1"/><path d="M1.5 8 H18.5 V16 H1.5 Z" fill="#2e86c8" stroke="#1a4a70" stroke-width="1"/><rect x="4" y="13.5" width="12" height="5.5" fill="#fff" stroke="#333" stroke-width="1"/></svg>
<svg class="r" style="left:672px;top:20px;" width="8" height="5" viewBox="0 0 8 5"><path d="M0.5 0.5 H7.5 L4 4 Z" fill="#333"/></svg>
<svg class="r" style="left:686px;top:12px;" width="20" height="20" viewBox="0 0 20 20"><path d="M5 6 Q16 3 16.5 11 Q16 17 10.5 18" fill="none" stroke="#2a7ab8" stroke-width="3"/><path d="M1 6.5 L8 1.5 L8 11 Z" fill="#2a7ab8"/></svg>
<svg class="r" style="left:711px;top:20px;" width="8" height="5" viewBox="0 0 8 5"><path d="M0.5 0.5 H7.5 L4 4 Z" fill="#333"/></svg>
<div class="r" style="left:723px;top:9px;width:39px;height:25px;background:#fff;border:1px solid #9c9c9c;"></div>
<div class="r" style="left:723px;top:9px;width:25px;height:25px;background:#b8b8b8;border:1px solid #8a8a8a;"></div>
<svg class="r" style="left:729px;top:12px;" width="14" height="20" viewBox="0 0 14 20"><path d="M2 1.5 V15.5 L5.5 12 L8.5 18.5 L10.8 17.5 L7.8 11 H12.5 Z" fill="#fff" stroke="#222" stroke-width="1.1" stroke-linejoin="round"/></svg>
<svg class="r" style="left:750.5px;top:20px;" width="8" height="5" viewBox="0 0 8 5"><path d="M0.5 0.5 H7.5 L4 4 Z" fill="#333"/></svg>
<svg class="r" style="left:769px;top:12px;" width="12" height="20" viewBox="0 0 12 20"><rect x="1" y="1" width="10" height="18" rx="5" fill="#1e1e1e"/><circle cx="6" cy="6" r="3" fill="#e03030"/><circle cx="6" cy="14" r="3" fill="#30a040"/><path d="M6 4.5 V7.5 M4.5 6 H7.5 M6 12.5 V15.5 M4.5 14 H7.5" stroke="#fff" stroke-width="0.7"/></svg>
<svg class="r" style="left:792px;top:12px;" width="18" height="20" viewBox="0 0 18 20"><rect x="1.5" y="1.5" width="15" height="17" fill="#fff" stroke="#333" stroke-width="1.1"/><rect x="3.5" y="4" width="4" height="3" fill="#2a6ea8"/><rect x="3.5" y="9" width="4" height="3" fill="#2a6ea8"/><rect x="3.5" y="14" width="4" height="3" fill="#2a6ea8"/><path d="M9 5.5 H15 M9 10.5 H15 M9 15.5 H15" stroke="#333" stroke-width="1"/></svg>
<svg class="r" style="left:817px;top:13px;" width="18" height="18" viewBox="0 0 18 18"><path d="M9 1 L10.5 3.2 L13 2.3 L13.6 4.9 L16.3 5.3 L15.6 7.9 L17.5 9.8 L15.4 11.4 L16 14 L13.4 14.4 L12.6 17 L10.2 15.8 L8 17.5 L6.5 15.3 L3.9 16.1 L3.4 13.5 L0.8 12.9 L1.6 10.4 L0 8.3 L2.2 6.9 L1.8 4.2 L4.4 3.9 L5.3 1.4 L7.7 2.6 Z" fill="#f4f4f4" stroke="#555" stroke-width="1"/><circle cx="9" cy="9.3" r="3.2" fill="#f4f4f4" stroke="#555" stroke-width="1"/></svg>
<svg class="r" style="left:841.5px;top:20px;" width="8" height="5" viewBox="0 0 8 5"><path d="M0.5 0.5 H7.5 L4 4 Z" fill="#333"/></svg>
<div class="t" style="left:858px;top:16.00px;font-size:11.4px;color:#000;font-weight:normal;transform:scaleX(0.9869);transform-origin:left top;">Sketch5 of Select par...</div>
<div class="r" style="left:979px;top:10px;width:202px;height:23px;background:#f8f8f8;border:1px solid #b4b4b4;"></div>
<div class="r" style="left:1004px;top:12px;width:139px;height:19px;background:#e9ebef;"></div>
<svg class="r" style="left:985px;top:13px;" width="16" height="16" viewBox="0 0 16 16"><rect x="0.5" y="0.5" width="15" height="15" fill="#111"/><rect x="2" y="2" width="12" height="12" fill="#fff"/><rect x="3" y="3" width="10" height="10" fill="#111"/><path d="M4.5 5 L8 8 L4.5 11" fill="none" stroke="#fff" stroke-width="1.2"/><path d="M8.5 11.5 H12" stroke="#fff" stroke-width="1"/></svg>
<div class="t" style="left:1006.6px;top:16.00px;font-size:11.4px;color:#6a6a6a;font-weight:normal;transform:scaleX(0.9531);transform-origin:left top;">Search Commands</div>
<svg class="r" style="left:1146px;top:12px;" width="20" height="20" viewBox="0 0 20 20"><circle cx="8" cy="8" r="6.5" fill="none" stroke="#555" stroke-width="1.6"/><path d="M12.5 12.5 L18.5 18.5" stroke="#555" stroke-width="2.2"/></svg>
<svg class="r" style="left:1171px;top:21px;" width="7" height="4" viewBox="0 0 7 4"><path d="M0.5 0.5 H6.5 L3.5 3.5 Z" fill="#888"/></svg>
<div class="t" style="left:1193px;top:14.00px;font-size:16px;color:#333;font-weight:bold;">?</div>
<svg class="r" style="left:1212.5px;top:19.5px;" width="8" height="5" viewBox="0 0 8 5"><path d="M0.5 0.5 H7.5 L4 4 Z" fill="#333"/></svg>
<div class="r" style="left:1232px;top:25px;width:10px;height:3px;background:#333;"></div>
<svg class="r" style="left:1254px;top:15px;" width="19" height="15" viewBox="0 0 19 15"><rect x="0.75" y="0.75" width="17" height="13" fill="none" stroke="#333" stroke-width="1.3"/><path d="M9.25 1 V14 M4 7.5 H14.5 M6 5.5 L4 7.5 L6 9.5 M12.5 5.5 L14.5 7.5 L12.5 9.5" fill="none" stroke="#333" stroke-width="1.1"/></svg>
<svg class="r" style="left:1281px;top:15px;" width="16" height="15" viewBox="0 0 16 15"><rect x="0.75" y="0.75" width="14.5" height="13" fill="none" stroke="#333" stroke-width="1.4"/><rect x="0.75" y="0.75" width="14.5" height="2" fill="#333"/></svg>
<svg class="r" style="left:1309px;top:17px;" width="12" height="12" viewBox="0 0 12 12"><path d="M1 1 L11 11 M11 1 L1 11" stroke="#333" stroke-width="1.5"/></svg>
<svg class="r" style="left:611px;top:151px;" width="20" height="20" viewBox="0 0 20 20"><circle cx="12" cy="7.5" r="6" fill="#eef0f2" stroke="#8a8a8a" stroke-width="1.3"/><path d="M7.5 12 L2 17.5" stroke="#4a8ab8" stroke-width="3" stroke-linecap="round"/><path d="M12 3.5 L10.5 5 H13.5 Z M12 11.5 L10.5 10 H13.5 Z M8 7.5 L9.5 6 V9 Z M16 7.5 L14.5 6 V9 Z" fill="#555"/></svg>
<svg class="r" style="left:636px;top:151px;" width="20" height="20" viewBox="0 0 20 20"><circle cx="12" cy="7.5" r="6" fill="#eef0f2" stroke="#8a8a8a" stroke-width="1.3"/><path d="M7.5 12 L2 17.5" stroke="#4a8ab8" stroke-width="3" stroke-linecap="round"/><rect x="6" y="1" width="12" height="12" fill="none" stroke="#333" stroke-width="1" stroke-dasharray="2 1.5"/></svg>
<svg class="r" style="left:662px;top:151px;" width="20" height="20" viewBox="0 0 20 20"><path d="M3 13 L13 3 L17 7 L7 17 Z" fill="#e8e8e8" stroke="#777" stroke-width="1.1"/><ellipse cx="5" cy="15" rx="2.5" ry="3" transform="rotate(45 5 15)" fill="#ccc" stroke="#777" stroke-width="1"/><path d="M10 15 H19" stroke="#4a8ab8" stroke-width="2.5"/><path d="M8 15 L12 11.5 V18.5 Z" fill="#4a8ab8"/></svg>
<svg class="r" style="left:689px;top:151px;" width="20" height="20" viewBox="0 0 20 20"><path d="M2 4 Q10 0 18 4 V17 Q10 20 2 17 Z" fill="#d8d8d8" stroke="#666" stroke-width="1"/><path d="M3 5 H8 V17.5 L3 16.5 Z M12 5 H17 V16.5 L12 17.5 Z" fill="#3a7ab0"/><path d="M4 10 L7 7 M4 14 L7 11 M13 10 L16 7 M13 14 L16 11" stroke="#fff" stroke-width="0.8"/><ellipse cx="10" cy="4.5" rx="3" ry="1.2" fill="#fff" stroke="#777" stroke-width="0.8"/></svg>
<svg class="r" style="left:714px;top:151px;" width="20" height="20" viewBox="0 0 20 20"><path d="M2 14 L11 5 L15 9 L6 18 Z" fill="#e8e8e8" stroke="#777" stroke-width="1.1"/><path d="M6 9 L12 1 L11 5 H16 L10 10 Z" fill="#f0a030"/><text x="13" y="19.5" font-family="Liberation Serif" font-size="11" fill="#3a7ab0">A</text></svg>
<svg class="r" style="left:741px;top:151px;" width="20" height="20" viewBox="0 0 20 20"><path d="M1.5 6 L6 1.5 H18.5 V14 L14 18.5 H1.5 Z" fill="#fff" stroke="#555" stroke-width="1"/><rect x="1.5" y="6" width="12.5" height="12.5" fill="#7ab8d8" stroke="#3a6a90" stroke-width="1"/><path d="M14 6 L18.5 1.5 M16 4 V10 M14.5 12 H18" stroke="#555" stroke-width="0.8"/></svg>
<svg class="r" style="left:765.5px;top:159.5px;" width="8" height="5" viewBox="0 0 8 5"><path d="M0.5 0.5 H7.5 L4 4 Z" fill="#9a9a9a"/></svg>
<svg class="r" style="left:781px;top:151px;" width="19" height="20" viewBox="0 0 19 20"><path d="M1.5 4.5 L8 1.5 L17.5 3.5 V16 L10 19 L1.5 16.5 Z" fill="#eaeaea" stroke="#555" stroke-width="1"/><path d="M1.5 4.5 L10 6.5 V19 L1.5 16.5 Z" fill="#6aaed6"/><path d="M10 6.5 L17.5 3.5" stroke="#555" stroke-width="0.8"/></svg>
<svg class="r" style="left:805.5px;top:159.5px;" width="8" height="5" viewBox="0 0 8 5"><path d="M0.5 0.5 H7.5 L4 4 Z" fill="#9a9a9a"/></svg>
<svg class="r" style="left:820px;top:151px;" width="20" height="20" viewBox="0 0 20 20"><path d="M1 10 Q10 1 19 10 Q10 19 1 10 Z" fill="#f2f2f2" stroke="#aaa" stroke-width="1"/><circle cx="10" cy="10" r="4" fill="#555"/><path d="M10 2 V18" stroke="#222" stroke-width="1"/></svg>
<svg class="r" style="left:845.5px;top:159.5px;" width="8" height="5" viewBox="0 0 8 5"><path d="M0.5 0.5 H7.5 L4 4 Z" fill="#9a9a9a"/></svg>
<svg class="r" style="left:860px;top:151px;" width="21" height="21" viewBox="0 0 21 21"><circle cx="8.5" cy="8.5" r="7.5" fill="#e6e6e6" stroke="#d0d0d0" stroke-width="1"/><path d="M19 10 L10 19 L8 20 L9 18 L18 9 Z" fill="#f0f0f0" stroke="#c8c8c8" stroke-width="1"/></svg>
<svg class="r" style="left:886px;top:151px;" width="20" height="21" viewBox="0 0 20 21"><path d="M10 10 L3 10 A7 7 0 0 1 10 3 Z" fill="#4a90d8"/><path d="M10 10 V3 A7 7 0 0 1 17 10 Z" fill="#e04848"/><path d="M3 10 A7 7 0 0 0 10 13 V10 Z" fill="#48b048"/><path d="M10 10 H17 A7 7 0 0 1 10 13 Z" fill="#f0c040"/><rect x="1" y="13" width="18" height="7" fill="#333"/><path d="M3 14.5 H6 V16 H3 Z M9 14.5 H12 V16 H9 Z M15 14.5 H18 V16 H15 Z M5 17.5 H8 V19 H5 Z M12 17.5 H15 V19 H12 Z" fill="#fff"/></svg>
<svg class="r" style="left:911.5px;top:159.5px;" width="8" height="5" viewBox="0 0 8 5"><path d="M0.5 0.5 H7.5 L4 4 Z" fill="#9a9a9a"/></svg>
<svg class="r" style="left:926px;top:152px;" width="20" height="19" viewBox="0 0 20 19"><rect x="1.5" y="1.5" width="17" height="11" fill="#e4e4e4" stroke="#555" stroke-width="1.2"/><path d="M10 13 V16 M6 17 H14" stroke="#444" stroke-width="1.6"/></svg>
<svg class="r" style="left:951.5px;top:159.5px;" width="8" height="5" viewBox="0 0 8 5"><path d="M0.5 0.5 H7.5 L4 4 Z" fill="#9a9a9a"/></svg>
<svg class="r" style="left:1197px;top:132px;" width="14" height="15" viewBox="0 0 14 15"><rect x="1.5" y="1" width="11" height="13" fill="none" stroke="#a8a8a8" stroke-width="1"/><path d="M1.5 1.5 H12.5" stroke="#a8a8a8" stroke-width="1.5"/><path d="M7 5 L3.5 7.5 L7 10 Z" fill="#a8a8a8"/></svg>
<svg class="r" style="left:1223px;top:132px;" width="14" height="15" viewBox="0 0 14 15"><rect x="1.5" y="1" width="11" height="13" fill="none" stroke="#a8a8a8" stroke-width="1"/><path d="M1.5 1.5 H12.5" stroke="#a8a8a8" stroke-width="1.5"/><path d="M7 5 L10.5 7.5 L7 10 Z" fill="#a8a8a8"/></svg>
<div class="r" style="left:1251px;top:142px;width:10px;height:3px;background:#a8a8a8;"></div>
<svg class="r" style="left:1274px;top:132px;" width="15" height="13" viewBox="0 0 15 13"><rect x="1.5" y="4.5" width="9" height="7.5" fill="#fff" stroke="#a8a8a8" stroke-width="1"/><path d="M4.5 4.5 V1.5 H13.5 V9 H10.5" fill="none" stroke="#a8a8a8" stroke-width="1"/><path d="M4.5 2 H13.5" stroke="#a8a8a8" stroke-width="1.5"/></svg>
<svg class="r" style="left:1302px;top:133px;" width="12" height="12" viewBox="0 0 12 12"><path d="M1 1 L11 11 M11 1 L1 11" stroke="#a8a8a8" stroke-width="1.2"/></svg>
<svg class="r" style="left:1224px;top:179px;" width="46" height="37" viewBox="0 0 46 37"><path d="M2 2 H20 M2 2 V18 Q2 27 12 27 H20" fill="none" stroke="#d6e4ee" stroke-width="2.5"/><path d="M42 12 Q40 27 26 25" fill="none" stroke="#d0dfea" stroke-width="4.5"/><path d="M17 26 L28 17 L28 35 Z" fill="#d0dfea"/></svg>
<svg class="r" style="left:1269px;top:209px;" width="28" height="28" viewBox="0 0 28 28"><path d="M4 4 L24 24 M24 4 L4 24" stroke="#f0caca" stroke-width="5.5" stroke-linecap="round"/></svg>
<div class="r" style="left:968px;top:182px;width:251px;height:37px;background:rgba(0,0,0,0.28);filter:blur(2px);"></div>
<div class="r" style="left:964px;top:178px;width:252px;height:37px;background:#f5f5f5;border:1px solid #8c8c8c;"></div>
<div class="r" style="left:1118px;top:182px;width:30px;height:30px;background:#b4b4b4;border:1px solid #606060;"></div>
<svg class="r" style="left:973px;top:187px;" width="22" height="20" viewBox="0 0 22 20"><rect x="8" y="1" width="11" height="10" fill="#fff" stroke="#222" stroke-width="1.1"/><rect x="5" y="4" width="11" height="10" fill="#4a90c0" stroke="#222" stroke-width="1.1"/><rect x="1.5" y="7" width="11" height="10" fill="#f0f0f0" stroke="#222" stroke-width="1.1"/><path d="M9 9 V19 L11.5 16.5 L13.5 20 L15 19 L13 16 H16.5 Z" fill="#fff" stroke="#333" stroke-width="0.9"/></svg>
<svg class="r" style="left:1004px;top:187px;" width="20" height="20" viewBox="0 0 20 20"><path d="M2.5 1 V19" stroke="#2a6f9e" stroke-width="1.8"/><path d="M17.5 1 V19" stroke="#2a6f9e" stroke-width="1.8" stroke-dasharray="2.2 1.5"/><path d="M6 6 H12 M14 12 H8" stroke="#222" stroke-width="1.6"/><path d="M11 3 L15 6 L11 9 Z M9 9 L5 12 L9 15 Z" fill="#222"/></svg>
<svg class="r" style="left:1033px;top:187px;" width="21" height="21" viewBox="0 0 21 21"><path d="M3 1 L4 4 M1 2.5 L6 2.5 M1.5 4.5 L5.5 0.5 M1.5 0.5 L5.5 4.5" stroke="#f08a10" stroke-width="1"/><rect x="5" y="5" width="15" height="15" rx="1" fill="#f4f4f4" stroke="#333" stroke-width="1.1"/><text x="11.5" y="18" font-family="Liberation Sans" font-size="12" font-weight="bold" fill="#333" text-anchor="middle">A</text><circle cx="17" cy="8.5" r="1.6" fill="none" stroke="#333" stroke-width="0.8"/></svg>
<svg class="r" style="left:1063px;top:187px;" width="20" height="20" viewBox="0 0 20 20"><circle cx="12" cy="8" r="6" fill="#f2f2f2" stroke="#555" stroke-width="1.3"/><path d="M9.5 6.5 H14.5 M9.5 9.5 H14.5" stroke="#222" stroke-width="1.4"/><path d="M7.5 12.5 L2 18" stroke="#4a8ab8" stroke-width="3" stroke-linecap="round"/></svg>
<svg class="r" style="left:1092px;top:187px;" width="21" height="20" viewBox="0 0 21 20"><path d="M13 2.5 A8 8 0 0 1 19 11" fill="none" stroke="#2a6f9e" stroke-width="1.6"/><path d="M4 10 L13 19" stroke="#2a6f9e" stroke-width="1.6"/><path d="M9 12 L16 5" stroke="#222" stroke-width="1.8"/><path d="M8 8 L8 13 L13 13 Z" fill="#222"/><rect x="0.7" y="7.7" width="3.6" height="3.6" fill="#fff" stroke="#222" stroke-width="1"/><rect x="4.7" y="2.7" width="3.6" height="3.6" fill="#fff" stroke="#222" stroke-width="1"/><rect x="13.7" y="10.2" width="3.6" height="3.6" fill="#fff" stroke="#222" stroke-width="1"/><rect x="10.7" y="16.7" width="3.6" height="3.6" fill="#fff" stroke="#222" stroke-width="1"/></svg>
<svg class="r" style="left:1123px;top:187px;" width="21" height="20" viewBox="0 0 21 20"><path d="M13 4 L19 10 L9 19" fill="none" stroke="#222" stroke-width="1.8"/><path d="M18 7.5 L8.5 17.5" stroke="#2a6f9e" stroke-width="1.8"/><path d="M5.5 14 L15 4.5" stroke="#222" stroke-width="2"/><path d="M4 16 L5 10 L10 15 Z M17 3 L11 4 L16 9 Z" fill="#222"/><path d="M3 0.5 V6 M5.5 0.5 V6 M1 2.5 H8 M1 4.5 H8" stroke="#222" stroke-width="0.9"/></svg>
<svg class="r" style="left:1153px;top:186px;" width="22" height="22" viewBox="0 0 22 22"><path d="M11.4 2.4 L18.4 9.6 M1.6 12 L8.8 19.2" stroke="#2a6f9e" stroke-width="2.2"/><path d="M5.5 10 L9 6.5" stroke="#222" stroke-width="2.2"/><path d="M3 12.8 L3.6 7.2 L8.6 12.2 Z M11.8 4 L6.2 4.6 L11.2 9.6 Z" fill="#222"/></svg>
<svg class="r" style="left:1181px;top:186px;" width="24" height="24" viewBox="0 0 24 24"><path d="M4 3 H17.2 M4 2.2 V12 Q4 17.5 10.5 18.5" fill="none" stroke="#2a6f9e" stroke-width="2"/><path d="M20.8 10.5 Q20.5 17 14 17.5" fill="none" stroke="#2a6f9e" stroke-width="2.8"/><path d="M9.6 15.6 L14.2 11.6 L15 20 Z" fill="#2a6f9e"/></svg>
<div class="r" style="left:967px;top:229px;width:253px;height:351px;background:rgba(0,0,0,0.30);filter:blur(2px);"></div>
<div class="r" style="left:964px;top:226px;width:252px;height:351px;background:#f5f5f5;border:1px solid #8c8c8c;"></div>
<div class="r" style="left:968px;top:254px;width:240px;height:24px;background:#fff;border:1px solid #c4c4c4;"></div>
<div class="t" style="left:1002px;top:236.00px;font-size:11.5px;color:#000;font-weight:normal;transform:scaleX(1.0556);transform-origin:left top;">Select Midpoint</div>
<div class="r" style="left:1010px;top:247.5px;width:7px;height:1px;background:#000;"></div>
<div class="t" style="left:1002px;top:260.00px;font-size:11.5px;color:#000;font-weight:normal;transform:scaleX(1.0125);transform-origin:left top;">Select Loop</div>
<div class="r" style="left:1016px;top:272px;width:3px;height:1px;background:#000;"></div>
<div class="t" style="left:1002px;top:283.00px;font-size:11.5px;color:#000;font-weight:normal;transform:scaleX(1.0241);transform-origin:left top;">Selection Tools</div>
<svg class="r" style="left:1196px;top:285.4px;" width="6" height="9" viewBox="0 0 6 9"><path d="M1 0.5 L5 4.5 L1 8.5 Z" fill="#444"/></svg>
<div class="r" style="left:996px;top:303px;width:219px;height:1px;background:#d0d0d0;"></div>
<div class="t" style="left:1002px;top:310.00px;font-size:11.5px;color:#000;font-weight:normal;transform:scaleX(1.0618);transform-origin:left top;">Zoom/Pan/Rotate</div>
<svg class="r" style="left:1196px;top:311.7px;" width="6" height="9" viewBox="0 0 6 9"><path d="M1 0.5 L5 4.5 L1 8.5 Z" fill="#444"/></svg>
<div class="t" style="left:1002px;top:333.00px;font-size:11.5px;color:#000;font-weight:normal;transform:scaleX(0.9980);transform-origin:left top;">Display Grid</div>
<div class="r" style="left:1002px;top:345.2px;width:8px;height:1px;background:#000;"></div>
<div class="r" style="left:996px;top:353px;width:219px;height:1px;background:#d0d0d0;"></div>
<div class="t" style="left:1002px;top:360.00px;font-size:11.5px;color:#000;font-weight:normal;transform:scaleX(1.0210);transform-origin:left top;">Recent Commands</div>
<div class="r" style="left:1002px;top:372px;width:8px;height:1px;background:#000;"></div>
<svg class="r" style="left:1196px;top:362px;" width="6" height="9" viewBox="0 0 6 9"><path d="M1 0.5 L5 4.5 L1 8.5 Z" fill="#444"/></svg>
<div class="t" style="left:1002px;top:384.00px;font-size:11.5px;color:#000;font-weight:normal;transform:scaleX(0.9952);transform-origin:left top;">Sketch Entities</div>
<svg class="r" style="left:1196px;top:386.3px;" width="6" height="9" viewBox="0 0 6 9"><path d="M1 0.5 L5 4.5 L1 8.5 Z" fill="#444"/></svg>
<div class="t" style="left:1002px;top:408.00px;font-size:11.5px;color:#000;font-weight:normal;transform:scaleX(1.0316);transform-origin:left top;">More Dimensions</div>
<div class="r" style="left:1002px;top:420.1px;width:10px;height:1px;background:#000;"></div>
<svg class="r" style="left:1196px;top:410.1px;" width="6" height="9" viewBox="0 0 6 9"><path d="M1 0.5 L5 4.5 L1 8.5 Z" fill="#444"/></svg>
<div class="r" style="left:965px;top:426px;width:250px;height:1px;background:#d0d0d0;"></div>
<div class="t" style="left:968.3px;top:432.00px;font-size:11.5px;color:#000;font-weight:bold;transform:scaleX(0.9795);transform-origin:left top;">Relations</div>
<div class="r" style="left:965px;top:449px;width:250px;height:1px;background:#d0d0d0;"></div>
<div class="t" style="left:1002px;top:456.00px;font-size:11.5px;color:#000;font-weight:normal;transform:scaleX(1.0039);transform-origin:left top;">Display/Delete Relations...</div>
<div class="r" style="left:1010px;top:467.6px;width:3px;height:1px;background:#000;"></div>
<div class="t" style="left:1002px;top:480.00px;font-size:11.5px;color:#000;font-weight:normal;transform:scaleX(1.0078);transform-origin:left top;">Sketch Tools</div>
<svg class="r" style="left:1196px;top:481.8px;" width="6" height="9" viewBox="0 0 6 9"><path d="M1 0.5 L5 4.5 L1 8.5 Z" fill="#444"/></svg>
<div class="r" style="left:965px;top:498px;width:250px;height:1px;background:#d0d0d0;"></div>
<div class="t" style="left:968.3px;top:504.00px;font-size:11.5px;color:#000;font-weight:bold;transform:scaleX(0.9530);transform-origin:left top;">Body</div>
<div class="r" style="left:965px;top:521px;width:250px;height:1px;background:#d0d0d0;"></div>
<div class="t" style="left:1002px;top:528.00px;font-size:11.5px;color:#000;font-weight:normal;transform:scaleX(1.0485);transform-origin:left top;">Hide</div>
<svg class="r" style="left:1086px;top:559px;" width="9" height="10" viewBox="0 0 9 10"><path d="M1 1 L4.5 4 L8 1 M1 5 L4.5 8 L8 5" fill="none" stroke="#222" stroke-width="1.3"/></svg>
<svg class="r" style="left:971px;top:329px;" width="24" height="22" viewBox="0 0 24 22"><path d="M2 5 H16 M2 9.5 H16 M2 14 H14 M5.5 1.5 V19 M10 1.5 V19 M14.5 1.5 V12" stroke="#3a7aa8" stroke-width="1.2"/><ellipse cx="16" cy="16.5" rx="5.5" ry="3.3" fill="#fff" stroke="#222" stroke-width="1.1"/><circle cx="16" cy="16.5" r="1.8" fill="#222"/></svg>
<svg class="r" style="left:971px;top:451px;" width="22" height="22" viewBox="0 0 22 22"><path d="M5 2 V15.5 M1 16 H10" stroke="#222" stroke-width="1.5"/><ellipse cx="14.5" cy="16" rx="5.5" ry="3.3" fill="#fff" stroke="#222" stroke-width="1.1"/><circle cx="14.5" cy="16" r="1.8" fill="#222"/></svg>
<svg class="r" style="left:971px;top:525px;" width="22" height="18" viewBox="0 0 22 18"><path d="M2 9 Q11 0 20 9 Q11 18 2 9 Z" fill="#f2f2f2" stroke="#999" stroke-width="1.1"/><circle cx="11" cy="9" r="3" fill="#bbb"/><path d="M4 2 L17 16" stroke="#444" stroke-width="1.4"/></svg>
<svg class="r" style="left:960px;top:249px;" width="248" height="33" viewBox="0 0 248 33"><path d="M16 4.2 Q90 3.6 160 4.6 H237 Q243.5 4.8 243.5 10.5 V21.5 Q243.5 27.6 237 27.6 H130 Q70 28.2 16 27.6 Q3.6 27 3.6 16 Q3.6 4.6 16 4.2 Z" fill="none" stroke="#22a23a" stroke-width="2.6"/></svg>
<div class="r" style="left:1302px;top:175px;width:26px;height:144px;background:#d6d6d6;border:1px solid #9a9a9a;border-right:none;"></div>
<div class="r" style="left:1302px;top:199px;width:26px;height:1px;background:#9a9a9a;"></div>
<div class="r" style="left:1302px;top:223px;width:26px;height:1px;background:#9a9a9a;"></div>
<div class="r" style="left:1302px;top:247px;width:26px;height:1px;background:#9a9a9a;"></div>
<div class="r" style="left:1302px;top:271px;width:26px;height:1px;background:#9a9a9a;"></div>
<div class="r" style="left:1302px;top:295px;width:26px;height:1px;background:#9a9a9a;"></div>
<div class="r" style="left:1303px;top:271px;width:25px;height:23px;background:#f4f4f4;"></div>
<svg class="r" style="left:1305px;top:178px;" width="20" height="18" viewBox="0 0 20 18"><path d="M1.5 9 L10 1.5 L18.5 9" fill="none" stroke="#1e5a8a" stroke-width="2.2"/><path d="M4 8 V16.5 H16 V8" fill="#fff" stroke="#222" stroke-width="1.2"/><rect x="8.5" y="11" width="3.5" height="5.5" fill="#fff" stroke="#222" stroke-width="1"/></svg>
<svg class="r" style="left:1305px;top:201px;" width="20" height="19" viewBox="0 0 20 19"><path d="M3 4 L9 2 V16 L3 18 Z M8 3 L13 1 V15 L8 17 M12 2 L16 1 L18 3 V16 L13 17" fill="#fff" stroke="#222" stroke-width="1.1"/><path d="M3 4 Q5 2 9 2 M8 3 Q10 1 13 1" fill="none" stroke="#222" stroke-width="1"/></svg>
<svg class="r" style="left:1305px;top:225px;" width="20" height="19" viewBox="0 0 20 19"><path d="M1.5 3 H7 L9 5 H16 V9" fill="#eee" stroke="#222" stroke-width="1.1"/><path d="M1.5 3 V17 H15 L18.5 8 H5 L1.5 17" fill="#f4f4f4" stroke="#222" stroke-width="1.1"/></svg>
<svg class="r" style="left:1305px;top:249px;" width="20" height="19" viewBox="0 0 20 19"><rect x="1.5" y="1.5" width="17" height="16" rx="1" fill="#fff" stroke="#222" stroke-width="1.1"/><rect x="4" y="4" width="8" height="3" fill="#f0b820"/><rect x="13.5" y="4" width="3" height="3" fill="#f0b820"/><path d="M4 13 H11 V10 H8 V13" fill="#f0b820"/><rect x="4" y="12" width="9" height="3" fill="#f0b820"/><rect x="7" y="8" width="3" height="5" fill="#f0b820"/><rect x="14" y="9" width="2.5" height="6.5" fill="#aaa"/></svg>
<svg class="r" style="left:1305px;top:272px;" width="20" height="20" viewBox="0 0 20 20"><circle cx="10" cy="10" r="8.5" fill="#e83030"/><path d="M10 10 L1.5 10 A8.5 8.5 0 0 1 10 1.5 Z" fill="#3a7ad8"/><path d="M10 10 L1.5 10 A8.5 8.5 0 0 0 8 18.3 Z" fill="#3aaa3a"/><path d="M10 10 L8 18.3 A8.5 8.5 0 0 0 18 13 Z" fill="#f0b830"/><circle cx="10" cy="10" r="8.5" fill="none" stroke="#7a4a20" stroke-width="0.7"/><ellipse cx="7" cy="5" rx="3" ry="1.8" fill="#fff" opacity="0.5"/></svg>
<svg class="r" style="left:1305px;top:296px;" width="20" height="20" viewBox="0 0 20 20"><rect x="1.5" y="1.5" width="17" height="17" rx="1" fill="#fff" stroke="#1a3a5a" stroke-width="1.2"/><rect x="1.5" y="1.5" width="17" height="3" fill="#3a8ed0"/><path d="M4 8 H7 M4 11.5 H7 M4 15 H7" stroke="#2a70b0" stroke-width="1.8"/><path d="M8.5 8 H16 M8.5 11.5 H16 M8.5 15 H16" stroke="#222" stroke-width="1"/></svg>
<div class="r" style="left:1px;top:893px;width:65px;height:14px;background:#b4b4b4;border:1px solid #8a8a8a;"></div>
<div class="r" style="left:2px;top:894px;width:15px;height:12px;background:#c0c0c0;border:1px solid #a4a4a4;"></div>
<div class="r" style="left:18px;top:894px;width:15px;height:12px;background:#c0c0c0;border:1px solid #a4a4a4;"></div>
<div class="r" style="left:34px;top:894px;width:15px;height:12px;background:#c0c0c0;border:1px solid #a4a4a4;"></div>
<div class="r" style="left:50px;top:894px;width:15px;height:12px;background:#c0c0c0;border:1px solid #a4a4a4;"></div>
<svg class="r" style="left:2px;top:894px;" width="64" height="12" viewBox="0 0 64 12"><path d="M5 2 V10 M11 2 L7 6 L11 10 Z" fill="#9a9a9a" stroke="#9a9a9a" stroke-width="1"/><path d="M26 2 L22 6 L26 10 Z" fill="#9a9a9a"/><path d="M38 2 L42 6 L38 10 Z" fill="#9a9a9a"/><path d="M59 2 V10 M53 2 L57 6 L53 10 Z" fill="#9a9a9a" stroke="#9a9a9a" stroke-width="1"/></svg>
<div class="r" style="left:123px;top:893px;width:177px;height:14px;background:#d4d4d4;"></div>
<div class="r" style="left:123px;top:893px;width:1px;height:14px;background:#8a8a8a;"></div>
<div class="r" style="left:191px;top:893px;width:1px;height:14px;background:#8a8a8a;"></div>
<div class="r" style="left:299px;top:893px;width:1px;height:14px;background:#8a8a8a;"></div>
<div class="t" style="left:79.3px;top:893.00px;font-size:12px;color:#000;font-weight:bold;transform:scaleX(1.0068);transform-origin:left top;">Model</div>
<div class="t" style="left:134px;top:894.00px;font-size:11.5px;color:#000;font-weight:normal;transform:scaleX(0.9676);transform-origin:left top;">3D Views</div>
<div class="t" style="left:201.5px;top:894.00px;font-size:11.5px;color:#000;font-weight:normal;transform:scaleX(1.0403);transform-origin:left top;">Motion Study 1</div>
<div class="t" style="left:1.2px;top:912.00px;font-size:11.5px;color:#000;font-weight:normal;transform:scaleX(0.9739);transform-origin:left top;">SOLIDWORKS Premium 2017 x64 Edition</div>
<div class="t" style="left:721.3px;top:912.00px;font-size:11.5px;color:#000;font-weight:normal;transform:scaleX(0.9913);transform-origin:left top;">104.231mm</div>
<div class="t" style="left:805px;top:912.00px;font-size:11.5px;color:#000;font-weight:normal;transform:scaleX(1.0430);transform-origin:left top;">8.717mm</div>
<div class="t" style="left:869px;top:912.00px;font-size:11.5px;color:#000;font-weight:normal;transform:scaleX(1.1348);transform-origin:left top;">0mm</div>
<div class="t" style="left:918px;top:912.00px;font-size:11.5px;color:#000;font-weight:normal;transform:scaleX(1.0222);transform-origin:left top;">Under Defined</div>
<div class="r" style="left:1003px;top:909px;width:1px;height:16px;background:#c8c8c8;"></div>
<div class="t" style="left:1011.4px;top:912.00px;font-size:11.5px;color:#000;font-weight:normal;transform:scaleX(1.0136);transform-origin:left top;">Editing Sketch5</div>
<div class="r" style="left:1099px;top:909px;width:1px;height:16px;background:#c8c8c8;"></div>
<svg class="r" style="left:1116px;top:909px;" width="9" height="16" viewBox="0 0 9 16"><rect x="1" y="1.5" width="7" height="13" rx="3" fill="#222"/><circle cx="4.5" cy="5" r="2" fill="#e03030"/><circle cx="4.5" cy="11" r="2" fill="#30a040"/></svg>
<div class="t" style="left:1162px;top:912.00px;font-size:11.5px;color:#000;font-weight:normal;transform:scaleX(1.0342);transform-origin:left top;">MMGS</div>
<svg class="r" style="left:1217px;top:912px;" width="8" height="6" viewBox="0 0 8 6"><path d="M0.5 5 H7.5 L4 1 Z" fill="#222"/></svg>
<svg class="r" style="left:1288px;top:908px;" width="20" height="17" viewBox="0 0 20 17"><path d="M1 6 L7 2 L18 8 V11 L12 15 L1 9 Z" fill="#f4f4f4" stroke="#222" stroke-width="1.2"/><circle cx="5.5" cy="5.5" r="2.3" fill="#fff" stroke="#222" stroke-width="1.1"/><path d="M9 10 L12 8" stroke="#222" stroke-width="1.4"/></svg>
<svg class="r" style="left:1317px;top:915px;" width="10" height="10" viewBox="0 0 10 10"><rect x="6" y="1" width="2" height="2" fill="#aaa"/><rect x="3" y="4" width="2" height="2" fill="#aaa"/><rect x="6" y="4" width="2" height="2" fill="#aaa"/><rect x="0" y="7" width="2" height="2" fill="#aaa"/><rect x="3" y="7" width="2" height="2" fill="#aaa"/><rect x="6" y="7" width="2" height="2" fill="#aaa"/></svg>
<div class="r" style="left:1325px;top:893px;width:1px;height:14px;background:#a8c0d8;"></div>
</body></html>
